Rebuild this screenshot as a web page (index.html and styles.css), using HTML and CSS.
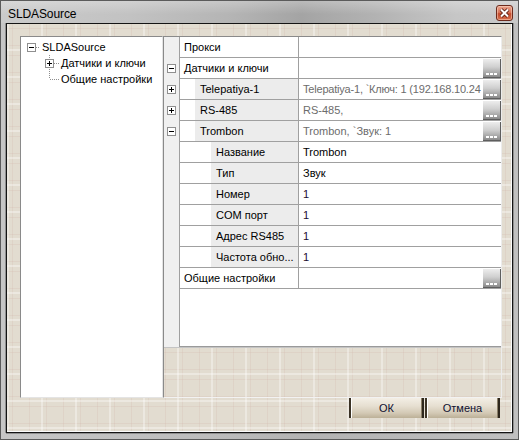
FILE: index.html
```html
<!DOCTYPE html>
<html>
<head>
<meta charset="utf-8">
<link rel="stylesheet" href="styles.css">
</head>
<body>
<div class="window">
  <div class="titlebar">
    <span class="title">SLDASource</span>
    <span class="close"><svg width="11" height="10" viewBox="0 0 11 10"><path d="M2 1.5 L9 8.5 M9 1.5 L2 8.5" stroke="#5a1c10" stroke-width="3.8"/><path d="M2 1.5 L9 8.5 M9 1.5 L2 8.5" stroke="#fff" stroke-width="2"/></svg></span>
  </div>
  <div class="frame">
    <div class="main">
      <div class="tree">
        <div class="trow root">
          <svg class="conn" width="15" height="16" viewBox="0 0 15 16"><line x1="10" y1="8.5" x2="14" y2="8.5" class="dot"/><rect x="1.5" y="4.5" width="8" height="8" class="box"/><line x1="3" y1="8.5" x2="8" y2="8.5" class="sign"/></svg>
          <span class="tlabel">SLDASource</span>
        </div>
        <div class="trow child">
          <svg class="conn" width="16" height="16" viewBox="0 0 16 16"><line x1="5.5" y1="0" x2="5.5" y2="16" class="dot"/><line x1="10" y1="8.5" x2="15" y2="8.5" class="dot"/><rect x="1.5" y="4.5" width="8" height="8" class="box"/><line x1="3" y1="8.5" x2="8" y2="8.5" class="sign"/><line x1="5.5" y1="6" x2="5.5" y2="11" class="sign"/></svg>
          <span class="tlabel">Датчики и ключи</span>
        </div>
        <div class="trow child">
          <svg class="conn" width="16" height="16" viewBox="0 0 16 16"><line x1="5.5" y1="0" x2="5.5" y2="8" class="dot"/><line x1="6" y1="8.5" x2="15" y2="8.5" class="dot"/></svg>
          <span class="tlabel">Общие настройки</span>
        </div>
      </div>
      <div class="gridpanel">
        <div class="grid">
          <div class="row">
            <div class="gut"></div>
            <div class="body"><div class="name cat"><span class="label">Прокси</span></div><div class="val"><span class="vtext"></span></div></div>
          </div>
          <div class="row">
            <div class="gut"><svg width="9" height="9" viewBox="0 0 9 9"><rect x="0.5" y="0.5" width="8" height="8" class="box"/><line x1="2" y1="4.5" x2="7" y2="4.5" class="sign"/></svg></div>
            <div class="body"><div class="name cat"><span class="label">Датчики и ключи</span></div><div class="val"><span class="vtext"></span><span class="ell"><i></i><i></i><i></i></span></div></div>
          </div>
          <div class="row">
            <div class="gut"><svg width="9" height="9" viewBox="0 0 9 9"><rect x="0.5" y="0.5" width="8" height="8" class="box"/><line x1="2" y1="4.5" x2="7" y2="4.5" class="sign"/><line x1="4.5" y1="2" x2="4.5" y2="7" class="sign"/></svg></div>
            <div class="body"><div class="name l1"><span class="label">Telepatiya-1</span></div><div class="val"><span class="vtext gray tight">Telepatiya-1, `Ключ: 1 (192.168.10.24</span><span class="ell"><i></i><i></i><i></i></span></div></div>
          </div>
          <div class="row">
            <div class="gut"><svg width="9" height="9" viewBox="0 0 9 9"><rect x="0.5" y="0.5" width="8" height="8" class="box"/><line x1="2" y1="4.5" x2="7" y2="4.5" class="sign"/><line x1="4.5" y1="2" x2="4.5" y2="7" class="sign"/></svg></div>
            <div class="body"><div class="name l1"><span class="label">RS-485</span></div><div class="val"><span class="vtext gray">RS-485,</span><span class="ell"><i></i><i></i><i></i></span></div></div>
          </div>
          <div class="row">
            <div class="gut"><svg width="9" height="9" viewBox="0 0 9 9"><rect x="0.5" y="0.5" width="8" height="8" class="box"/><line x1="2" y1="4.5" x2="7" y2="4.5" class="sign"/></svg></div>
            <div class="body"><div class="name l1"><span class="label">Trombon</span></div><div class="val"><span class="vtext gray">Trombon, `Звук: 1</span><span class="ell"><i></i><i></i><i></i></span></div></div>
          </div>
          <div class="row">
            <div class="gut"></div>
            <div class="body"><div class="name l2"><span class="label">Название</span></div><div class="val"><span class="vtext">Trombon</span></div></div>
          </div>
          <div class="row">
            <div class="gut"></div>
            <div class="body"><div class="name l2"><span class="label">Тип</span></div><div class="val"><span class="vtext">Звук</span></div></div>
          </div>
          <div class="row">
            <div class="gut"></div>
            <div class="body"><div class="name l2"><span class="label">Номер</span></div><div class="val"><span class="vtext num">1</span></div></div>
          </div>
          <div class="row">
            <div class="gut"></div>
            <div class="body"><div class="name l2"><span class="label">COM порт</span></div><div class="val"><span class="vtext num">1</span></div></div>
          </div>
          <div class="row">
            <div class="gut"></div>
            <div class="body"><div class="name l2"><span class="label">Адрес RS485</span></div><div class="val"><span class="vtext num">1</span></div></div>
          </div>
          <div class="row">
            <div class="gut"></div>
            <div class="body"><div class="name l2"><span class="label">Частота обно...</span></div><div class="val"><span class="vtext num">1</span></div></div>
          </div>
          <div class="row">
            <div class="gut"></div>
            <div class="body"><div class="name cat"><span class="label">Общие настройки</span></div><div class="val"><span class="vtext"></span><span class="ell"><i></i><i></i><i></i></span></div></div>
          </div>
          <div class="filler">
            <div class="gut"></div>
            <div class="fillbody"></div>
          </div>
        </div>
        <div class="help"></div>
      </div>
    </div>
    <div class="buttons">
      <button class="btn">ОК</button>
      <button class="btn">Отмена</button>
    </div>
  </div>
</div>
</body>
</html>
```

FILE: styles.css
```css
* { box-sizing: border-box; }
html, body { margin: 0; padding: 0; background: #ffffff; }
body { font-family: "Liberation Sans", Arial, sans-serif; font-size: 11px; color: #000; }

.window {
  width: 519px;
  height: 440px;
  border: 1px solid #5b5b5b;
  background: linear-gradient(90deg, #c6c6c6 0%, #bdbdbd 40%, #b3b3b3 60%, #c0c0c0 100%);
  padding: 0 5px 6px 5px;
  display: flex;
  flex-direction: column;
}

.titlebar {
  height: 22px;
  margin: 0 -5px;
  padding: 0 5px 0 7px;
  display: flex;
  align-items: flex-start;
  background:
    linear-gradient(180deg, rgba(255,255,255,0.25), rgba(255,255,255,0) 60%),
    linear-gradient(90deg, #cbcbcb 0%, #c2c2c2 25%, #b4b4b4 45%, #a4a4a4 58%, #b2b2b2 72%, #c6c6c6 88%, #c9c9c9 100%);
}
.title {
  font-size: 12px;
  line-height: 14px;
  margin-top: 6px;
  color: #000;
  letter-spacing: -0.1px;
}
.close {
  margin-left: auto;
  margin-top: 4px;
  width: 17px;
  height: 16px;
  border: 1px solid #6d2a1c;
  border-radius: 3px;
  background: linear-gradient(180deg, #eba58f 0%, #d9755a 45%, #c24a2c 55%, #d7704e 100%);
  box-shadow: inset 0 0 0 1px rgba(255,220,200,0.5);
  display: flex;
  align-items: center;
  justify-content: center;
}

.frame {
  height: 410px;
  border: 1px solid #141414;
  box-shadow: -1px 0 0 #8f8f8f, 1px 0 0 #8f8f8f, 0 1px 0 #8f8f8f, inset -1px -1px 0 #fbfbfb;
  background-color: #e2dcd0;
  background-image:
    linear-gradient(90deg, rgba(255,255,255,0.35) 2px, transparent 2px),
    linear-gradient(0deg, rgba(255,255,255,0.35) 2px, transparent 2px),
    linear-gradient(90deg, transparent 5px, rgba(205,170,160,0.18) 5px, rgba(205,170,160,0.18) 6px, transparent 6px, transparent 22px, rgba(205,170,160,0.18) 22px, rgba(205,170,160,0.18) 23px, transparent 23px),
    linear-gradient(0deg, transparent 5px, rgba(205,170,160,0.18) 5px, rgba(205,170,160,0.18) 6px, transparent 6px, transparent 22px, rgba(205,170,160,0.18) 22px, rgba(205,170,160,0.18) 23px, transparent 23px);
  background-size: 34px 27px, 34px 27px, 34px 27px, 34px 27px;
  display: flex;
  flex-direction: column;
}

.main {
  display: flex;
  height: 362px;
  margin: 12px 10px 0 13px;
}

/* tree */
.tree {
  width: 143px;
  height: 100%;
  background: #fff;
  border-top: 1px solid #8a8a8a;
  border-left: 1px solid #8a8a8a;
  border-right: 1px solid #e4e4e4;
  border-bottom: 1px solid #e4e4e4;
  padding-top: 2px;
}
.trow {
  display: flex;
  align-items: center;
  height: 16px;
}
.trow.root { padding-left: 5px; }
.trow.child { padding-left: 23px; }
.conn { display: block; flex: none; }
.tlabel { margin-left: 1px; white-space: nowrap; }
.dot { stroke: #8e8e8e; stroke-width: 1; stroke-dasharray: 1 1; }
.box { fill: #fff; stroke: #8f8f8f; stroke-width: 1; }
.sign { stroke: #000; stroke-width: 1; }

/* property grid */
.gridpanel {
  width: 339px;
  height: 100%;
  border-top: 1px solid #8a8a8a;
  border-left: 1px solid #8a8a8a;
  border-right: 1px solid #ececec;
  border-bottom: 1px solid #f2f2f2;
  display: flex;
  flex-direction: column;
  min-width: 0;
}
.grid {
  display: flex;
  flex-direction: column;
  height: 310px;
  flex: none;
}
.row {
  display: flex;
  height: 21px;
  flex: none;
  min-width: 0;
}
.gut {
  width: 15px;
  background: #f0f0f0;
  display: flex;
  align-items: center;
  justify-content: center;
  padding-bottom: 1px;
  flex: none;
}
.gut svg { display: block; }
.body {
  flex: 1;
  min-width: 0;
  overflow: hidden;
  display: flex;
  background: #fff;
  border-left: 1px solid #a0a0a0;
  border-bottom: 1px solid #a0a0a0;
}
.name {
  width: 119px;
  display: flex;
  border-right: 1px solid #a0a0a0;
  flex: none;
}
.label {
  flex: 1;
  display: flex;
  align-items: center;
  white-space: nowrap;
  overflow: hidden;
}
.name.cat .label { padding-left: 4px; }
.name.l1 { padding-left: 15px; }
.name.l2 { padding-left: 31px; }
.name.l1 .label, .name.l2 .label { background: #ececec; padding-left: 5px; }

.val {
  flex: 1;
  display: flex;
  align-items: flex-start;
  min-width: 0;
}
.vtext {
  flex: 1;
  min-width: 0;
  height: 100%;
  padding-left: 4px;
  display: flex;
  align-items: center;
  white-space: nowrap;
  overflow: hidden;
}
.vtext.gray { color: #6c6c6c; }
.vtext.tight { letter-spacing: -0.2px; }
.vtext.num { color: #1c0c30; }
.ell {
  flex: none;
  width: 18px;
  height: 19px;
  margin-top: 1px;
  background: linear-gradient(180deg, #ededed 0%, #cfcfcf 45%, #a4a4a4 80%, #8a8a8a 100%);
  border-right: 1px solid #5e5e5e;
  border-bottom: 1px solid #5e5e5e;
  display: flex;
  align-items: flex-end;
  justify-content: center;
  gap: 1px;
  padding-bottom: 2px;
}
.ell i {
  display: block;
  width: 3px;
  height: 2px;
  background: #fff;
}

.filler {
  display: flex;
  flex: 1;
}
.fillbody {
  flex: 1;
  background: #fff;
  border-left: 1px solid #a0a0a0;
  border-bottom: 1px solid #9a9a9a;
}
.help {
  flex: 1;
  border-top: 1px solid #c4c4c4;
}

/* buttons */
.buttons {
  display: flex;
  justify-content: flex-end;
  gap: 1px;
  padding-right: 12px;
}
.btn {
  width: 75px;
  height: 20px;
  margin: 0;
  padding: 0;
  font-family: "Liberation Sans", Arial, sans-serif;
  font-size: 11px;
  font-weight: normal;
  color: #101030;
  border: none;
  border-left: 2px solid #3b3326;
  border-right: 2px solid #2e271c;
  background: linear-gradient(180deg, #f3eee5 0%, #e6dfd1 40%, #d3c9b5 75%, #bcb097 100%);
  box-shadow: inset 1px 0 0 #fff, inset -1px 0 0 #8a7f68;
}
```
